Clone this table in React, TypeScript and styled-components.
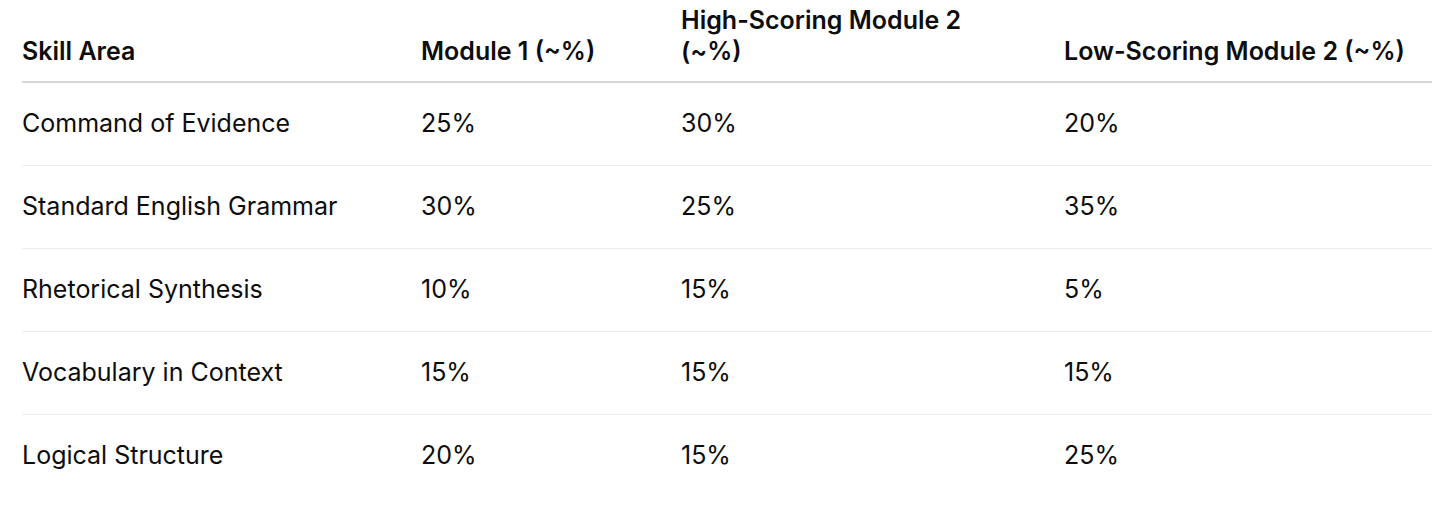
import React from "react";
import styled, { createGlobalStyle } from "styled-components";

const Global = createGlobalStyle`
  html, body { margin: 0; padding: 0; background: #ffffff; }
  body { font-family: Inter, "Noto Sans", "Liberation Sans", sans-serif; color: #0d0d0d; }
`;

const Wrap = styled.div`
  padding: 0 24px 0 22px;
`;

const Table = styled.table`
  width: 1410px;
  border-collapse: collapse;
  table-layout: fixed;
  font-size: 25px;
  line-height: 31px;
`;

const Col = styled.col<{ $w: number }>`
  width: ${(p) => p.$w}px;
`;

const Th = styled.th`
  text-align: left;
  vertical-align: bottom;
  font-weight: 600;
  padding: 5px 16px 14px 0;
  border-bottom: 2px solid #d6d6d6;
`;

const HeadText = styled.span<{ $max?: number }>`
  display: inline-block;
  max-width: ${(p) => (p.$max ? `${p.$max}px` : "none")};
`;

const Tr = styled.tr`
  & + & td {
    border-top: 1px solid #ececec;
  }
`;

const Td = styled.td`
  text-align: left;
  vertical-align: middle;
  font-weight: 400;
  padding: 25px 16px 26px 0;
`;

const rows = [
  ["Command of Evidence", "25%", "30%", "20%"],
  ["Standard English Grammar", "30%", "25%", "35%"],
  ["Rhetorical Synthesis", "10%", "15%", "5%"],
  ["Vocabulary in Context", "15%", "15%", "15%"],
  ["Logical Structure", "20%", "15%", "25%"],
];

export default function App() {
  return (
    <>
      <Global />
      <Wrap>
        <Table>
          <colgroup>
            <Col $w={399} />
            <Col $w={260} />
            <Col $w={383} />
            <Col $w={368} />
          </colgroup>
          <thead>
            <tr>
              <Th><HeadText>Skill Area</HeadText></Th>
              <Th><HeadText>Module 1 (~%)</HeadText></Th>
              <Th><HeadText $max={300}>High-Scoring Module 2 (~%)</HeadText></Th>
              <Th><HeadText>Low-Scoring Module 2 (~%)</HeadText></Th>
            </tr>
          </thead>
          <tbody>
            {rows.map((r) => (
              <Tr key={r[0]}>
                {r.map((c, i) => (
                  <Td key={i}>{c}</Td>
                ))}
              </Tr>
            ))}
          </tbody>
        </Table>
      </Wrap>
    </>
  );
}
